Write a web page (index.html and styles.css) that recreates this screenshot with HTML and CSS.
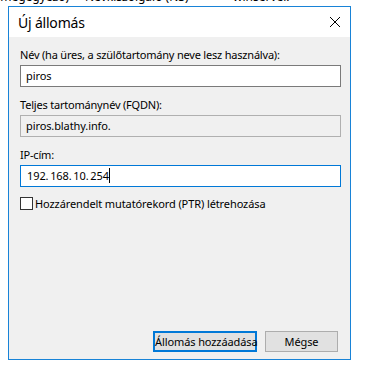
FILE: index.html
```html
<!DOCTYPE html>
<html lang="hu">
<head>
    <meta charset="UTF-8">
    <title>Új állomás</title>
    <link rel="stylesheet" href="styles.css">
</head>
<body>

<div class="backdrop">
    <span class="col1">l megegyező)</span>
    <span class="col2">Névkiszolgáló (NS)</span>
    <span class="col3">winserver.</span>
</div>

<div class="dialog">
    <div class="titlebar">
        <span class="title">Új állomás</span>
        <svg class="close" width="12" height="12" viewBox="0 0 12 12">
            <path d="M1 1 L11 11 M11 1 L1 11" stroke="#000" stroke-width="1" fill="none"/>
        </svg>
    </div>

    <div class="content">
        <label class="field-label">Név (ha üres, a szülőtartomány neve lesz használva):</label>
        <div class="textbox">piros</div>

        <label class="field-label">Teljes tartománynév (FQDN):</label>
        <div class="textbox readonly">piros.blathy.info.</div>

        <label class="field-label">IP-cím:</label>
        <div class="textbox focused ip">192.&#8201;168.&#8201;10.&#8201;254<span class="caret"></span></div>

        <div class="check-row">
            <span class="checkbox"></span>
            <span>Hozzárendelt mutatórekord (PTR) létrehozása</span>
        </div>

        <div class="buttons">
            <button class="btn default">Állomás hozzáadása</button>
            <button class="btn">Mégse</button>
        </div>
    </div>
</div>

</body>
</html>
```

FILE: styles.css
```css
body {
    margin: 0;
    background-color: #fff;
    font-family: "Noto Sans", "Open Sans", sans-serif;
    font-size: 11px;
    color: #000;
    overflow: hidden;
}

.backdrop {
    height: 6px;
    overflow: hidden;
    white-space: nowrap;
    position: relative;
}

.backdrop span {
    position: absolute;
    top: -11px;
    font-size: 12px;
    line-height: 15px;
}

.backdrop .col1 { left: -6px; }
.backdrop .col2 { left: 85px; }
.backdrop .col3 { left: 233px; }

.dialog {
    margin-left: 8px;
    width: 341px;
    height: 352px;
    border: 1px solid #1883d7;
    background-color: #f0f0f0;
}

.titlebar {
    height: 30px;
    background-color: #fff;
    display: flex;
    align-items: center;
    justify-content: space-between;
    padding: 0 9px 0 9px;
}

.title {
    font-size: 14px;
    letter-spacing: -0.2px;
}

.close {
    display: block;
}

.content {
    padding: 10px 0 0 11px;
}

.field-label {
    display: block;
    line-height: 15px;
    height: 15px;
    margin-bottom: 3px;
    letter-spacing: -0.2px;
}

.textbox {
    box-sizing: border-box;
    width: 321px;
    height: 22px;
    line-height: 20px;
    border: 1px solid #7a7a7a;
    background-color: #fff;
    padding: 0 5px;
    margin-bottom: 10px;
    letter-spacing: -0.1px;
}

.textbox.readonly {
    background-color: #f0f0f0;
    border-color: #b0b0b0;
}

.textbox.focused {
    border-color: #0078d7;
}

.textbox.ip {
    padding-left: 6px;
}

.caret {
    display: inline-block;
    width: 1px;
    height: 15px;
    background-color: #000;
    vertical-align: -3px;
}

.check-row {
    display: flex;
    align-items: center;
    gap: 2px;
    height: 13px;
    letter-spacing: -0.1px;
}

.checkbox {
    box-sizing: border-box;
    width: 13px;
    height: 13px;
    border: 1px solid #333;
    background-color: #fff;
}

.buttons {
    display: flex;
    justify-content: flex-end;
    gap: 8px;
    padding-right: 12px;
    margin-top: 121px;
}

.btn {
    box-sizing: border-box;
    height: 21px;
    border: 1px solid #adadad;
    background-color: #e1e1e1;
    font-family: inherit;
    font-size: 11px;
    letter-spacing: -0.1px;
    white-space: nowrap;
    padding: 0;
    color: #000;
}

.btn.default {
    width: 104px;
    border: 2px solid #0078d7;
}

.btn:not(.default) {
    width: 73px;
}
```
